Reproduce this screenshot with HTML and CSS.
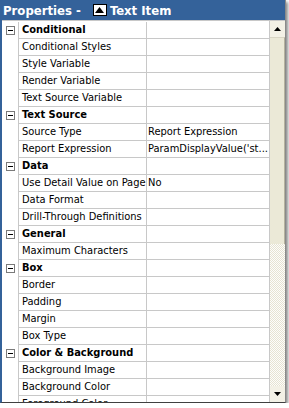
FILE: index.html
```html
<!DOCTYPE html>
<html lang="en">
<head>
    <meta charset="UTF-8">
    <title>Properties</title>
    <link rel="stylesheet" href="styles.css">
</head>
<body>
    <div class="window">
        <div class="titlebar">
            <span>Properties -</span>
            <span class="title-icon"><svg width="9" height="6" viewBox="0 0 9 6"><polygon points="0,6 4.5,0 9,6" fill="#000"/></svg></span>
            <span>Text Item</span>
        </div>
        <div class="panel">
            <div class="grid">
                <div class="row cat"><div class="glyph"><span class="minus"></span></div><div class="name">Conditional</div><div class="value"></div></div>
                <div class="row"><div class="glyph"></div><div class="name">Conditional Styles</div><div class="value"></div></div>
                <div class="row"><div class="glyph"></div><div class="name">Style Variable</div><div class="value"></div></div>
                <div class="row"><div class="glyph"></div><div class="name">Render Variable</div><div class="value"></div></div>
                <div class="row"><div class="glyph"></div><div class="name">Text Source Variable</div><div class="value"></div></div>
                <div class="row cat"><div class="glyph"><span class="minus"></span></div><div class="name">Text Source</div><div class="value"></div></div>
                <div class="row"><div class="glyph"></div><div class="name">Source Type</div><div class="value">Report Expression</div></div>
                <div class="row"><div class="glyph"></div><div class="name">Report Expression</div><div class="value">ParamDisplayValue('st...</div></div>
                <div class="row cat"><div class="glyph"><span class="minus"></span></div><div class="name">Data</div><div class="value"></div></div>
                <div class="row"><div class="glyph"></div><div class="name">Use Detail Value on Page</div><div class="value">No</div></div>
                <div class="row"><div class="glyph"></div><div class="name">Data Format</div><div class="value"></div></div>
                <div class="row"><div class="glyph"></div><div class="name">Drill-Through Definitions</div><div class="value"></div></div>
                <div class="row cat"><div class="glyph"><span class="minus"></span></div><div class="name">General</div><div class="value"></div></div>
                <div class="row"><div class="glyph"></div><div class="name">Maximum Characters</div><div class="value"></div></div>
                <div class="row cat"><div class="glyph"><span class="minus"></span></div><div class="name">Box</div><div class="value"></div></div>
                <div class="row"><div class="glyph"></div><div class="name">Border</div><div class="value"></div></div>
                <div class="row"><div class="glyph"></div><div class="name">Padding</div><div class="value"></div></div>
                <div class="row"><div class="glyph"></div><div class="name">Margin</div><div class="value"></div></div>
                <div class="row"><div class="glyph"></div><div class="name">Box Type</div><div class="value"></div></div>
                <div class="row cat"><div class="glyph"><span class="minus"></span></div><div class="name">Color &amp; Background</div><div class="value"></div></div>
                <div class="row"><div class="glyph"></div><div class="name">Background Image</div><div class="value"></div></div>
                <div class="row"><div class="glyph"></div><div class="name">Background Color</div><div class="value"></div></div>
                <div class="row"><div class="glyph"></div><div class="name">Foreground Color</div><div class="value"></div></div>
            </div>
            <div class="scrollbar">
                <div class="sb-button"><svg width="7" height="4" viewBox="0 0 7 4"><polygon points="0,4 3.5,0 7,4" fill="#000"/></svg></div>
                <div class="sb-thumb"></div>
                <div class="sb-track"></div>
                <div class="sb-button"><svg width="7" height="4" viewBox="0 0 7 4"><polygon points="0,0 3.5,4 7,0" fill="#000"/></svg></div>
            </div>
        </div>
    </div>
</body>
</html>
```

FILE: styles.css
```css
body {
    margin: 0;
    background-color: #fff;
    font-family: "DejaVu Sans", Verdana, sans-serif;
    font-stretch: condensed;
    font-size: 11px;
    color: #000;
}

.window {
    width: 283px;
    height: 402px;
    border-left: 2px solid #34629a;
    border-right: 1px solid #8a8a8a;
    border-bottom: 1px solid #404040;
    box-shadow: 2px 2px 3px rgba(0, 0, 0, 0.45);
    display: flex;
    flex-direction: column;
    overflow: hidden;
}

.titlebar {
    height: 20px;
    margin-left: -2px;
    padding-left: 3px;
    background-color: #34629a;
    color: #fff;
    font-weight: bold;
    font-size: 13px;
    display: flex;
    align-items: center;
    gap: 3px;
    border-bottom: 1px solid #c8c8c8;
    flex-shrink: 0;
}

.title-icon {
    width: 12px;
    height: 10px;
    background-color: #fff;
    border: 1px solid #000;
    display: flex;
    align-items: center;
    justify-content: center;
    margin-left: 9px;
}

.panel {
    flex: 1;
    display: flex;
    overflow: hidden;
}

.grid {
    flex: 1;
    padding-top: 1px;
}

.row {
    display: flex;
    height: 17px;
}

.glyph {
    width: 16px;
    display: flex;
    align-items: center;
    justify-content: center;
    flex-shrink: 0;
}

.minus {
    width: 7px;
    height: 7px;
    border: 1px solid #7a7a7a;
    background-color: #fff;
    position: relative;
}

.minus::after {
    content: "";
    position: absolute;
    left: 1px;
    top: 3px;
    width: 5px;
    height: 1px;
    background-color: #000;
}

.name,
.value {
    border-left: 1px solid #c8c8c8;
    border-bottom: 1px solid #c8c8c8;
    line-height: 16px;
    white-space: nowrap;
    overflow: hidden;
}

.name {
    width: 124px;
    padding-left: 3px;
    flex-shrink: 0;
}

.value {
    flex: 1;
    padding-left: 1px;
}

.cat .name {
    font-weight: bold;
}

.scrollbar {
    width: 15px;
    border-left: 1px solid #c8c8c8;
    display: flex;
    flex-direction: column;
}

.sb-button {
    height: 16px;
    background-color: #f3f1e6;
    display: flex;
    align-items: center;
    justify-content: center;
    flex-shrink: 0;
}

.sb-thumb {
    height: 206px;
    background-color: #ebe9d7;
    border-top: 1px solid #d8d5c4;
    border-right: 1px solid #b5b29f;
    flex-shrink: 0;
}

.sb-track {
    flex: 1;
    background: repeating-conic-gradient(#fdfdfb 0 25%, #e6e3d2 0 50%) 0 0 / 2px 2px;
}
```
